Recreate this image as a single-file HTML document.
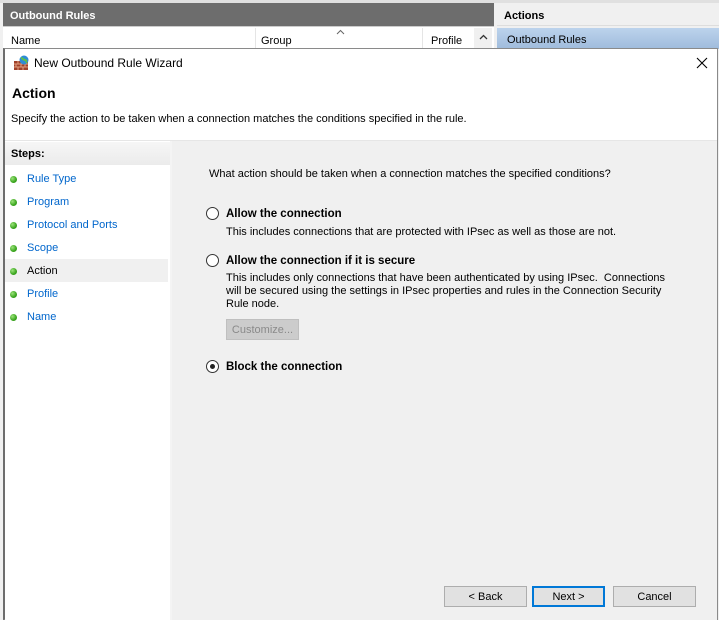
<!DOCTYPE html>
<html><head><meta charset="utf-8"><style>
*{margin:0;padding:0;box-sizing:border-box}
body{width:719px;height:620px;overflow:hidden;background:#f0f0f0;font-family:"Liberation Sans",sans-serif;font-size:11px;line-height:16px;color:#000;position:relative}
.abs{position:absolute}
.t{white-space:nowrap}
.dot{position:absolute;left:5px;width:7px;height:7px;border-radius:50%;background:radial-gradient(circle at 35% 35%,#9be37a,#3aa51e 60%,#2a8a15)}
.step{position:absolute;left:0;width:163px;height:23px}
.step span{position:absolute;left:22px;top:4px;color:#0066cc;font-size:11px}
.radio{position:absolute;width:13px;height:13px;border:1px solid #333;border-radius:50%;background:#fff}
.btn{position:absolute;height:21px;background:#e1e1e1;border:1px solid #adadad;text-align:center;line-height:21px;font-size:11px}
</style></head><body>
<div class="abs" style="left:0;top:0;width:719px;height:3px;background:#e0e0e0"></div>
<div class="abs" style="left:3px;top:3px;width:491px;height:23px;background:#6d6d6d"></div>
<div class="abs t" style="left:10px;top:8px;color:#fff;font-weight:bold;font-size:11px">Outbound Rules</div>
<div class="abs" style="left:3px;top:26px;width:491px;height:22px;background:#fff;border-top:1px solid #ccc"></div>
<div class="abs t" style="left:11px;top:33px">Name</div>
<div class="abs" style="left:255px;top:28px;width:1px;height:20px;background:#e5e5e5"></div>
<div class="abs t" style="left:261px;top:33px">Group</div>
<svg class="abs" style="left:336px;top:29px" width="9" height="6"><path d="M1 5L4.5 1.5L8 5" stroke="#666" fill="none"/></svg>
<div class="abs" style="left:422px;top:28px;width:1px;height:20px;background:#e5e5e5"></div>
<div class="abs t" style="left:431px;top:33px">Profile</div>
<div class="abs" style="left:474px;top:28px;width:18px;height:20px;background:#f0f0f0"></div>
<svg class="abs" style="left:479px;top:34px" width="9" height="6"><path d="M1 5L4.5 1.5L8 5" stroke="#333" stroke-width="1.3" fill="none"/></svg>
<div class="abs" style="left:497px;top:3px;width:222px;height:23px;background:#f0f0f0;border-bottom:1px solid #ddd"></div>
<div class="abs t" style="left:504px;top:8px;font-weight:bold">Actions</div>
<div class="abs" style="left:497px;top:28px;width:222px;height:21px;background:linear-gradient(#bcd3ec,#9fbbdc)"></div>
<div class="abs t" style="left:507px;top:32px">Outbound Rules</div>
<div class="abs" style="left:3px;top:48px;width:715px;height:572px;background:#fff;border:1px solid #8a8a8a;border-left:2px solid #6d6d6d"></div>
<svg class="abs" style="left:13px;top:55px" width="18" height="16" viewBox="0 0 18 16">
<rect x="1" y="6" width="14" height="9" fill="#a0402a"/>
<path d="M1 9h14M1 12h14M5 6v3M10 6v3M3 9v3M8 9v3M12 9v3M5 12v3M10 12v3" stroke="#e0a080" stroke-width="1"/>
<circle cx="11" cy="5" r="4.5" fill="#2e8bd6"/><path d="M8 3c2 0 2 2 4 2s1 3 2 2" stroke="#5cc04a" stroke-width="2" fill="none"/>
</svg>
<div class="abs t" style="left:34px;top:55px;font-size:12px">New Outbound Rule Wizard</div>
<svg class="abs" style="left:696px;top:57px" width="12" height="12"><path d="M1 1L11 11M11 1L1 11" stroke="#000" stroke-width="1.1"/></svg>
<div class="abs t" style="left:12px;top:85px;font-size:14px;font-weight:bold">Action</div>
<div class="abs t" style="left:11px;top:111px">Specify the action to be taken when a connection matches the conditions specified in the rule.</div>
<div class="abs" style="left:5px;top:140px;width:712px;height:1px;background:#e6e6e6"></div>
<div class="abs" style="left:5px;top:142px;width:165px;height:478px;background:#fff">
<div class="abs" style="left:0;top:0;width:165px;height:23px;background:linear-gradient(#f6f6f6,#ebebeb)"></div>
<div class="abs t" style="left:6px;top:4px;font-weight:bold">Steps:</div>
<div class="step" style="top:25px"><div class="dot" style="top:9px"></div><span>Rule Type</span></div>
<div class="step" style="top:48px"><div class="dot" style="top:9px"></div><span>Program</span></div>
<div class="step" style="top:71px"><div class="dot" style="top:9px"></div><span>Protocol and Ports</span></div>
<div class="step" style="top:94px"><div class="dot" style="top:9px"></div><span>Scope</span></div>
<div class="step" style="top:117px;background:#f0f0f0;width:163px"><div class="dot" style="top:9px"></div><span style="color:#000">Action</span></div>
<div class="step" style="top:140px"><div class="dot" style="top:9px"></div><span>Profile</span></div>
<div class="step" style="top:163px"><div class="dot" style="top:9px"></div><span>Name</span></div>
</div>
<div class="abs" style="left:170px;top:141px;width:2px;height:479px;background:#f4f4f4"></div>
<div class="abs" style="left:172px;top:141px;width:545px;height:479px;background:#f0f0f0"></div>
<div class="abs t" style="left:209px;top:166px">What action should be taken when a connection matches the specified conditions?</div>
<div class="radio" style="left:206px;top:207px"></div>
<div class="abs t" style="left:226px;top:206px;font-weight:bold;font-size:11.5px">Allow the connection</div>
<div class="abs t" style="left:226px;top:224px">This includes connections that are protected with IPsec as well as those are not.</div>
<div class="radio" style="left:206px;top:254px"></div>
<div class="abs t" style="left:226px;top:253px;font-weight:bold;font-size:11.5px">Allow the connection if it is secure</div>
<div class="abs t" style="left:226px;top:272px;line-height:13px">This includes only connections that have been authenticated by using IPsec.&nbsp; Connections<br>will be secured using the settings in IPsec properties and rules in the Connection Security<br>Rule node.</div>
<div class="btn" style="left:226px;top:319px;width:73px;background:#ccc;border-color:#bfbfbf;color:#8a8a8a">Customize...</div>
<div class="radio" style="left:206px;top:360px"><div style="position:absolute;left:3px;top:3px;width:5px;height:5px;border-radius:50%;background:#222"></div></div>
<div class="abs t" style="left:226px;top:359px;font-weight:bold;font-size:11.5px">Block the connection</div>
<div class="btn" style="left:444px;top:586px;width:83px">&lt; Back</div>
<div class="btn" style="left:532px;top:586px;width:73px;border:2px solid #0078d7;line-height:19px">Next &gt;</div>
<div class="btn" style="left:613px;top:586px;width:83px">Cancel</div>
</body></html>
